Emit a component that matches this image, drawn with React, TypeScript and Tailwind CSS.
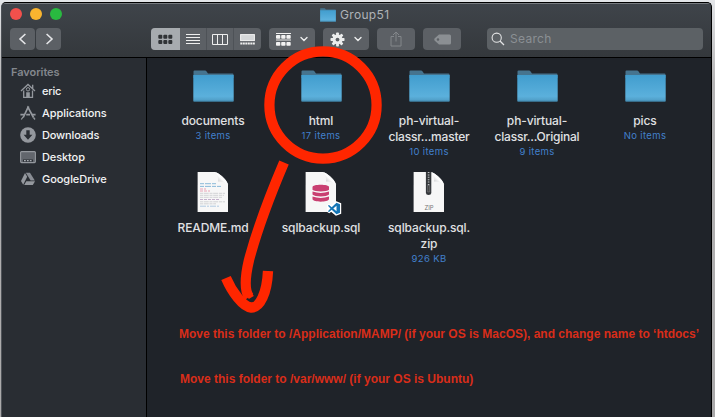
import React from "react";

function Folder({ className = "h-8 w-[41px]" }: { className?: string }) {
  return (
    <svg className={className} viewBox="0 0 41 32" preserveAspectRatio="none">
      <defs>
        <linearGradient id="folderFace" x1="0" y1="0" x2="0" y2="1">
          <stop offset="0" stopColor="#419dce" />
          <stop offset="0.8" stopColor="#5bb0dc" />
          <stop offset="1" stopColor="#4d99c1" />
        </linearGradient>
      </defs>
      <path d="M0.5 6V1.4Q0.5 0.5 1.5 0.5H12Q13 0.5 13.6 1.5L15 3.4H39.5Q40.5 3.4 40.5 4.5V8H0.5Z" fill="#46748f" />
      <path d="M0.3 5H40.7V30.6Q40.7 31.6 39.7 31.6H1.3Q0.3 31.6 0.3 30.6Z" fill="url(#folderFace)" />
      <path d="M0.5 31.2H40.5" stroke="#3b7899" strokeWidth="0.8" />
    </svg>
  );
}

function Page({ children }: { children: React.ReactNode }) {
  return (
    <svg className="h-[42px] w-[36px] overflow-visible" viewBox="0 0 36 42">
      <defs>
        <linearGradient id="pageCurl" x1="0" y1="1" x2="1" y2="0">
          <stop offset="0.1" stopColor="#b9babc" />
          <stop offset="0.5" stopColor="#fff" />
          <stop offset="1" stopColor="#cfd0d2" />
        </linearGradient>
      </defs>
      <path d="M2.6 0H20C24 1 32 8 33 12.5V40H2.6Z" fill="#f7f7f7" />
      <path d="M20 0Q24 4 23 9.6Q29 8.8 33 12.5C31.5 7 24 1 20 0Z" fill="url(#pageCurl)" />
      {children}
    </svg>
  );
}

function ReadmeIcon() {
  return (
    <Page>
      <g strokeWidth="0.6" fill="none">
        <path d="M5 11.7H22M5 14.4H26" stroke="#6eaad0" strokeWidth="0.8" strokeDasharray="4 1 6 1" />
        <path d="M5 17H11M5 19H15" stroke="#df6b8b" strokeDasharray="3 1" />
        <path d="M5 21.3H30M5 23.3H29M5 25.3H27M5 29.8H30M5 31.8H21" stroke="#b7b8bd" strokeDasharray="3 .7 5 .8" />
        <path d="M5 27.5H25" stroke="#a07dad" strokeDasharray="3 1" />
        <path d="M5 34.2H25" stroke="#83afd5" strokeDasharray="6 1 2 1" />
      </g>
    </Page>
  );
}

function SqlIcon() {
  return (
    <Page>
      <g fill="#c93f71">
        <path d="M9.5 15C9.5 12 26 12 26 15V17.7C24 20 11.5 20 9.5 17.7Z" />
        <path d="M9.5 19.5Q17.8 22.3 26 19.5V22.5C24 25 11.5 25 9.5 22.5Z" />
        <path d="M9.5 24.5Q17.8 27.3 26 24.5V27.3C25 30.5 10.5 30.5 9.5 27.3Z" />
      </g>
      <path d="M33 30L37.5 31.8V41.2L33 43L28.2 39L26.2 40.5L24.5 39.4V33.7L26.2 32.5L28.2 34Z" fill="#fff" stroke="#fff" strokeWidth="1.4" />
      <path fillRule="evenodd" d="M33.5 30.8L37 32.3V40.8L33.5 42.3L28.7 37.8L26 39.9L24.9 39.2L27.5 36.5L24.9 33.8L26 33.1L28.7 35.2ZM33.5 33.8L30.3 36.5L33.5 39.3Z" fill="#1475b5" />
    </Page>
  );
}

function ZipIcon() {
  return (
    <Page>
      <path d="M14.9 0H20.3V21Q20.3 23 17.6 23Q14.9 23 14.9 21Z" fill="#35383b" />
      <path d="M17.6 0V14" stroke="#bfc1c3" strokeWidth="1.6" strokeDasharray="1 1.4" />
      <path d="M16.6 13.5H18.7V20H16.6Z" fill="#444" stroke="#85878a" strokeWidth="0.5" />
      <text x="18" y="37.6" textAnchor="middle" fontSize="6" fill="#777" fontFamily="Inter, sans-serif">ZIP</text>
    </Page>
  );
}

const names = {
  home: (
    <>
      <path d="M1 8L8 1.5L15 8M12.7 5.7V1.8" fill="none" stroke="currentColor" strokeWidth="1.3" />
      <path d="M3.7 7.5V14.3H12.5V7.5" fill="none" stroke="currentColor" strokeWidth="1.3" />
      <circle cx="8" cy="6.3" r="1.7" fill="none" stroke="currentColor" strokeWidth="1" />
      <path d="M6.2 9.2H9.8V15H6.2Z" fill="currentColor" />
    </>
  ),
  apps: (
    <g fill="none" stroke="currentColor">
      <path d="M3.2 12.5L8 2.4L13.5 12.5" strokeWidth="1.7" />
      <path d="M7 2.4H9.2M0.4 9.6H4M6.2 9.6H10M12 9.6H15.6" strokeWidth="1.8" />
      <path d="M3 12L1.3 14.5M13.5 12.5L15 14.5" strokeWidth="1.3" />
    </g>
  ),
  downloads: (
    <>
      <circle cx="8" cy="8" r="7.8" fill="currentColor" />
      <path d="M6.3 3.3H9.7V7.7H12.4L8 12.8L3.6 7.7H6.3Z" fill="#292d33" />
    </>
  ),
  desktop: (
    <>
      <rect x="0.6" y="2.6" width="14.8" height="11" rx="1" fill="#62666d" stroke="currentColor" strokeWidth="1.1" />
      <path d="M3 11.7H13" stroke="#292d33" strokeWidth="2.2" />
      <path d="M4 11.6H12" stroke="#a8acb2" strokeWidth="1.4" strokeDasharray="1.8 1.1" />
    </>
  ),
  drive: (
    <g fill="currentColor">
      <path d="M5 2L7.2 5.8L3.2 13.8L1 10Z" />
      <path d="M5.8 1.7H10L14.8 9.5H10.6Z" opacity=".9" />
      <path d="M6.3 10.3H15L12.8 14H4.2Z" />
    </g>
  ),
};

const favorites: [keyof typeof names, string, string][] = [
  ["home", "eric", "tracking-[-0.2px]"],
  ["apps", "Applications", "tracking-[-0.05px]"],
  ["downloads", "Downloads", "tracking-[-0.15px]"],
  ["desktop", "Desktop", "tracking-[-0.1px]"],
  ["drive", "GoogleDrive", "tracking-[-0.05px]"],
];

function Item({ icon, lines, sub, iconBox = "h-[43px]" }: { icon: React.ReactNode; lines: string[]; sub?: string; iconBox?: string }) {
  return (
    <div className="flex w-[108px] flex-col items-center whitespace-nowrap">
      <div className={`flex items-start justify-center ${iconBox}`}>{icon}</div>
      {lines.map((line) => (
        <span
          key={line}
          className={`text-[12px] leading-4 font-medium text-[#e0e1e3] ${line.includes("...") ? "tracking-[-0.22px]" : "tracking-[-0.12px]"}`}
        >
          {line}
        </span>
      ))}
      {sub && <span className="text-[9.5px] leading-[13px] tracking-[0.35px] text-[#4280cc]">{sub}</span>}
    </div>
  );
}

function FolderItem({ lines, sub }: { lines: string[]; sub: string }) {
  return <Item icon={<Folder />} lines={lines} sub={sub} />;
}

const button = "flex h-[22px] shrink-0 items-center justify-center rounded-[4px] bg-[#5c6065]";

function Chevron() {
  return <svg className="h-2 w-2" viewBox="0 0 8 8"><path d="M1 2.5L4 5.5L7 2.5" fill="none" stroke="#eceded" strokeWidth="1.4" strokeLinecap="round" /></svg>;
}

export default function App() {
  return (
    <main className="h-[417px] w-[715px] overflow-hidden bg-linear-to-b from-[#e4e6e9] via-[#b5b4b5] via-20% to-[#aaa9aa] pt-[2px] pl-px font-['Inter','Noto_Sans',sans-serif]">
      <div className="relative flex h-[415px] w-[711px] flex-col overflow-hidden rounded-t-[5px] border-t border-r border-l border-t-black border-r-black border-l-[#4f5359] bg-[#1f2329]">
        <header className="h-[55px] shrink-0 border-t border-b border-t-[#777b80] border-b-black bg-linear-to-b from-[#3f444a] to-[#34383c]">
          <div className="flex h-[24px] items-start">
            <div className="flex w-[318px] gap-2 pt-[4px] pl-2">
              <span className="size-3 rounded-full bg-[#f2504c]" />
              <span className="size-3 rounded-full bg-[#f9b42f]" />
              <span className="size-3 rounded-full bg-[#29b940]" />
            </div>
            <div className="flex items-center gap-[4px] pt-[2px]">
              <Folder className="h-[14px] w-4" />
              <span className="text-[12px] leading-[17px] tracking-[0.32px] text-[#afb3b8]">Group51</span>
            </div>
          </div>
          <div className="flex items-center pl-2">
            <div className={`${button} w-[25px]`}><svg className="size-4" viewBox="0 0 16 16"><path d="M10.4 3L5 8L10.4 13" fill="none" stroke="#e5e6e8" strokeWidth="1.6" /></svg></div>
            <div className={`${button} ml-px w-[25px]`}><svg className="size-4" viewBox="0 0 16 16"><path d="M5.6 3L11 8L5.6 13" fill="none" stroke="#e5e6e8" strokeWidth="1.6" /></svg></div>
            <div className="ml-[90px] flex h-[22px] w-[110px] shrink-0 overflow-hidden rounded-[4px] bg-[#5c6065]">
              <div className="flex w-[29px] items-center justify-center bg-[#a7abaf]">
                <svg className="h-[11px] w-[15px]" viewBox="0 0 15 11"><g fill="#303336">{[0, 5, 10].flatMap((x) => [0.7, 6].map((y) => <rect key={`${x}-${y}`} x={x + .3} y={y} width="4" height="4" rx="1" />))}</g></svg>
              </div>
              <div className="flex w-[27px] items-center justify-center border-r border-[#4e5257]">
                <svg className="h-3 w-[14px]" viewBox="0 0 14 12"><path d="M0 1.5H14M0 4.5H14M0 7.5H14M0 10.5H14" stroke="#eee" /></svg>
              </div>
              <div className="flex w-[27px] items-center justify-center border-r border-[#4e5257]">
                <svg className="h-[11px] w-4" viewBox="0 0 16 11"><path d="M.5 .5H15.5V10.5H.5ZM5.5 .5V10.5M10.5 .5V10.5" fill="none" stroke="#eee" /></svg>
              </div>
              <div className="flex w-[27px] items-center justify-center">
                <svg className="h-[11px] w-[15px]" viewBox="0 0 15 11"><rect x=".6" y=".6" width="13.8" height="6" fill="#d5d7d9" stroke="#f2f2f2" /><path d="M.3 9.5H15" stroke="#eee" strokeWidth="2" strokeDasharray="2 .5" /></svg>
              </div>
            </div>
            <div className={`${button} ml-2 w-[46px] gap-[9px]`}>
              <svg className="h-[13px] w-[15px]" viewBox="0 0 15 13"><g fill="#f2f2f2"><path d="M0 0H15V1H0ZM0 6.5H15V7.5H0Z" />{[0, 5.2, 10.4].flatMap((x) => [2, 9].map((y) => <rect key={`${x}-${y}`} x={x} y={y} width="4.3" height="3.7" rx=".8" />))}</g></svg>
              <Chevron />
            </div>
            <div className={`${button} ml-2 w-[46px] gap-[9px]`}>
              <svg className="h-[15px] w-[15px]" viewBox="-8 -8 16 16"><g fill="#eceded">{[0, 45, 90, 135].map((a) => <rect key={a} x="-1.5" y="-7.5" width="3" height="15" rx=".8" transform={`rotate(${a})`} />)}<circle r="5.4" /></g><circle r="2" fill="#5c6065" /></svg>
              <Chevron />
            </div>
            <div className={`${button} ml-2 w-[38px]`}>
              <svg className="h-4 w-3" viewBox="0 0 12 16"><path d="M4 5.5H1V15H11V5.5H8M6 10.5V1.2M3 4L6 1L9 4" fill="none" stroke="#83878b" /></svg>
            </div>
            <div className={`${button} ml-2 w-[38px]`}>
              <svg className="h-[11px] w-[17px]" viewBox="0 0 17 11"><path fillRule="evenodd" d="M5 .5H15.5Q17 .5 17 2V9Q17 10.5 15.5 10.5H5L.5 6.5Q0 5.5 .5 4.5ZM4 4.2A1.3 1.3 0 1 0 4 6.8A1.3 1.3 0 0 0 4 4.2Z" fill="#8b8f93" /></svg>
            </div>
            <div className="ml-[26px] flex h-[22px] w-[216px] shrink-0 items-center rounded-[4px] bg-[#5c6165] pl-[4px]">
              <svg className="size-[14px]" viewBox="0 0 14 14"><circle cx="5.7" cy="5.7" r="4.6" fill="none" stroke="#e3e4e5" strokeWidth="1.1" /><path d="M9 9L13 13" stroke="#e3e4e5" strokeWidth="1.3" /></svg>
              <span className="ml-[5px] text-[12px] tracking-[0.3px] text-[#8b9094]">Search</span>
            </div>
          </div>
        </header>
        <div className="flex min-h-0 flex-1">
          <aside className="w-[145px] shrink-0 border-r border-black bg-[#292d33] pt-[7px]">
            <h2 className="pl-[9px] text-[11px] leading-[15px] font-semibold tracking-[-0.05px] text-[#83878d]">Favorites</h2>
            <ul>
              {favorites.map(([icon, label, tracking]) => (
                <li key={label} className="flex h-[22px] items-center gap-[6px] pl-[18px]">
                  <svg className="size-4 text-[#94989e]" viewBox="0 0 16 16">{names[icon]}</svg>
                  <span className={`text-[11px] font-medium text-[#f2f3f4] ${tracking}`}>{label}</span>
                </li>
              ))}
            </ul>
          </aside>
          <section className="flex flex-1 flex-col pt-[12px] pl-[12px]">
            <div className="flex h-[101px]">
              <FolderItem lines={["documents"]} sub="3 items" />
              <FolderItem lines={["html"]} sub="17 items" />
              <FolderItem lines={["ph-virtual-", "classr...master"]} sub="10 items" />
              <FolderItem lines={["ph-virtual-", "classr...Original"]} sub="9 items" />
              <FolderItem lines={["pics"]} sub="No items" />
            </div>
            <div className="flex h-[150px] pt-px">
              <Item icon={<ReadmeIcon />} iconBox="h-[48px]" lines={["README.md"]} />
              <Item icon={<SqlIcon />} iconBox="h-[48px]" lines={["sqlbackup.sql"]} />
              <Item icon={<ZipIcon />} iconBox="h-[48px]" lines={["sqlbackup.sql.", "zip"]} sub="926 KB" />
            </div>
            <div className="flex flex-col gap-[29px] pt-[5px] pl-[20px] font-['Liberation_Sans',Arial,sans-serif] text-[12px] leading-4 font-bold whitespace-nowrap text-[#d92d19]">
              <p>Move this folder to /Application/MAMP/ (if your OS is MacOS), and change name to ‘htdocs’</p>
              <p className="pl-px">Move this folder to /var/www/ (if your OS is Ubuntu)</p>
            </div>
          </section>
        </div>
        <svg className="pointer-events-none absolute top-[-3px] left-[-2px] h-[417px] w-[715px]" viewBox="0 0 715 417" fill="none" stroke="#ff2600" strokeWidth="10.3">
          <circle cx="323" cy="105" r="53.6" />
          <path d="M284 162.5C271 193 257 230 249 260C245 277 244 290 249 297" />
          <path d="M226 278C232 292 243 307 251 307.5C260 308 267 293 268 271" />
          <path d="M247 296L252 293" strokeWidth="7" />
        </svg>
      </div>
    </main>
  );
}
